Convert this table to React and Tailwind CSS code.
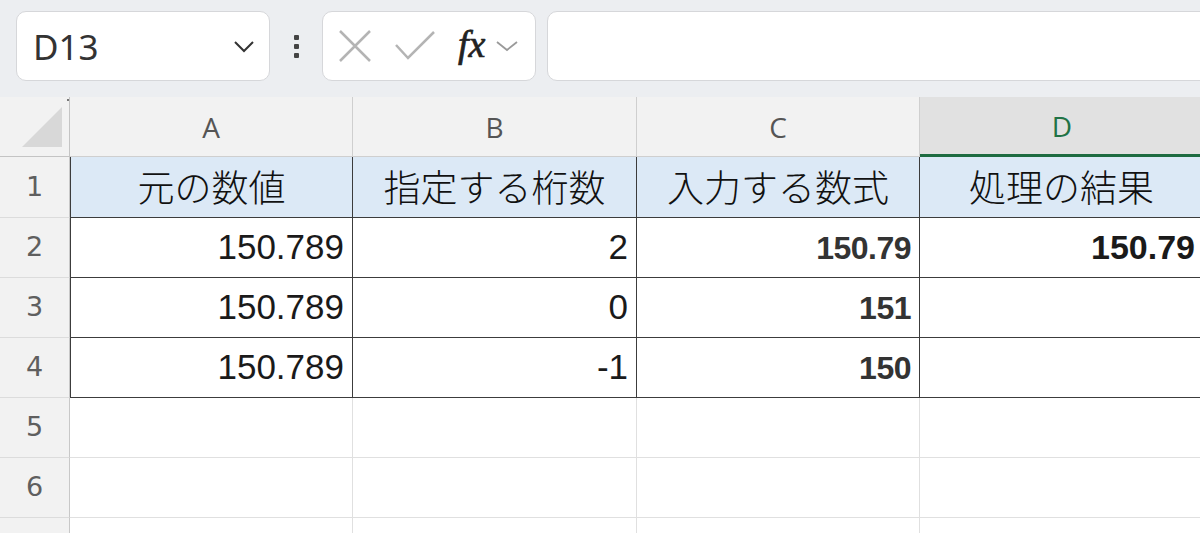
const cols = ["A", "B", "C", "D"];

const rows = [
  { n: 1, cells: ["元の数値", "指定する桁数", "入力する数式", "処理の結果"], head: true },
  { n: 2, cells: ["150.789", "2", "150.79", "150.79"] },
  { n: 3, cells: ["150.789", "0", "151", ""] },
  { n: 4, cells: ["150.789", "-1", "150", ""] },
  { n: 5, cells: ["", "", "", ""], empty: true },
  { n: 6, cells: ["", "", "", ""], empty: true },
  { n: 7, cells: ["", "", "", ""], empty: true, hideNum: true },
];

const grid = "grid grid-cols-[70px_283px_284px_283px_284px]";

function Toolbar() {
  return (
    <div className="h-[97px] bg-[#eceef1] flex items-start pt-[11px] pl-4">
      {/* name box */}
      <div className="shrink-0 w-[254px] h-[70px] bg-white border border-[#d6d7da] rounded-[10px] flex items-center pl-4 pr-[14px]">
        <span className="flex-1 text-[35px] text-[#333] font-['Noto_Sans',sans-serif] leading-none">D13</span>
        <svg width="22" height="13" viewBox="0 0 22 13">
          <path d="M2 2 L11 11 L20 2" fill="none" stroke="#333" strokeWidth="2" />
        </svg>
      </div>
      <div className="shrink-0 w-[52px] h-[70px] flex flex-col items-center justify-center gap-[4px]">
        <span className="w-[5px] h-[5px] bg-[#444] rounded-[1px]" />
        <span className="w-[5px] h-[5px] bg-[#444] rounded-[1px]" />
        <span className="w-[5px] h-[5px] bg-[#444] rounded-[1px]" />
      </div>
      {/* cancel / enter / fx */}
      <div className="shrink-0 w-[214px] h-[70px] bg-white border border-[#d6d7da] rounded-[10px] flex items-center pl-[15px]">
        <svg width="34" height="34" viewBox="0 0 34 34">
          <path d="M2 2 L32 32 M32 2 L2 32" stroke="#b4b4b4" strokeWidth="2.5" fill="none" />
        </svg>
        <svg width="42" height="32" viewBox="0 0 42 32" className="ml-[22px]">
          <path d="M2 15 L14 28 L40 2" stroke="#b4b4b4" strokeWidth="2.5" fill="none" />
        </svg>
        <span className="ml-[22px] text-[38px] italic text-[#222] [-webkit-text-stroke:0.7px_#222] font-['Liberation_Serif',serif] leading-none -mt-[4px]">fx</span>
        <svg width="24" height="12" viewBox="0 0 24 12" className="ml-[10px]">
          <path d="M2 2 L12 10 L22 2" stroke="#9a9a9a" strokeWidth="1.8" fill="none" />
        </svg>
      </div>
      {/* formula bar */}
      <div className="shrink-0 ml-[11px] w-[700px] h-[70px] bg-white border border-[#d6d7da] rounded-[10px]" />
    </div>
  );
}

function HeaderRow() {
  return (
    <div className={`${grid} h-[60px] bg-[#f2f2f2]`}>
      <div className="relative border-r border-b border-[#c4c4c4]">
        <span className="absolute top-[2px] right-0 w-[2px] h-[2px] bg-[#777]" />
        <svg width="44" height="44" viewBox="0 0 44 44" className="absolute left-[20px] top-[8px]">
          <polygon points="2,42 42,2 42,42" fill="#d8d8d8" />
        </svg>
      </div>
      {cols.map((c) =>
        c === "D" ? (
          <div key={c} className="bg-[#e1e1e1] border-b-[3px] border-[#1e6b41] flex items-center justify-center text-[28px] text-[#217346] font-['Open_Sans',sans-serif]">
            {c}
          </div>
        ) : (
          <div key={c} className="border-r border-b border-[#cfcfcf] flex items-center justify-center text-[28px] text-[#555] font-['Open_Sans',sans-serif]">
            {c}
          </div>
        )
      )}
    </div>
  );
}

function Cell({ value, col, row }) {
  if (row.empty) {
    return <div className="bg-white border-r border-b border-[#e0e0e0]" />;
  }
  const base = "border-r-[1.5px] border-b-[1.5px] border-[#3c3c3c] flex items-center";
  const left = col === 0 ? " border-l" : "";
  if (row.head) {
    return (
      <div className={`${base}${left} bg-[#dce9f6] justify-center text-[37px] font-light text-[#111] font-['Noto_Sans_CJK_JP',sans-serif]`}>
        {value}
      </div>
    );
  }
  const style =
    col === 2
      ? "text-[32px] font-bold text-[#333] tracking-[-0.5px]"
      : col === 3
      ? "text-[34px] font-bold text-[#1a1a1a]"
      : "text-[35px] text-[#1a1a1a]";
  return (
    <div className={`${base}${left} bg-white justify-end pr-2 font-['Liberation_Sans',sans-serif] ${style}`}>
      {value}
    </div>
  );
}

function Row({ row }) {
  return (
    <div className={`${grid} ${row.n === 1 ? "h-[61px]" : "h-[60px]"}`}>
      <div className="bg-[#f2f2f2] border-r border-b border-[#c8c8c8] border-b-[#dcdcdc] flex items-center justify-center text-[27px] text-[#5f5f5f] font-['DejaVu_Sans',sans-serif]">
        {row.hideNum ? "" : row.n}
      </div>
      {row.cells.map((v, i) => (
        <Cell key={i} value={v} col={i} row={row} />
      ))}
    </div>
  );
}

export default function App() {
  return (
    <div className="w-[1200px] h-[533px] overflow-hidden bg-white">
      <Toolbar />
      <HeaderRow />
      {rows.map((r) => (
        <Row key={r.n} row={r} />
      ))}
    </div>
  );
}
